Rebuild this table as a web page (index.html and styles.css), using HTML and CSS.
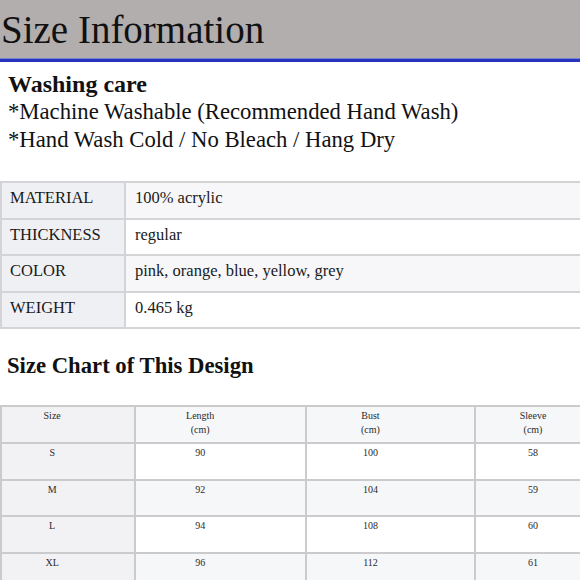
FILE: index.html
```html
<!DOCTYPE html>
<html lang="en">
<head>
<meta charset="utf-8">
<title>Size Information</title>
<link rel="stylesheet" href="styles.css">
</head>
<body>
<header class="banner">
  <h1 class="banner-title">Size Information</h1>
</header>

<section class="care">
  <h2 class="care-title">Washing care</h2>
  <p class="care-line">*Machine Washable (Recommended Hand Wash)</p>
  <p class="care-line">*Hand Wash Cold / No Bleach / Hang Dry</p>
</section>

<div class="clip">
  <div class="specs">
    <div class="spec-label">MATERIAL</div><div class="spec-value stripe">100% acrylic</div>
    <div class="spec-label">THICKNESS</div><div class="spec-value">regular</div>
    <div class="spec-label">COLOR</div><div class="spec-value stripe">pink, orange, blue, yellow, grey</div>
    <div class="spec-label">WEIGHT</div><div class="spec-value">0.465 kg</div>
  </div>
</div>

<h2 class="chart-title">Size Chart of This Design</h2>

<div class="clip">
  <div class="chart">
    <div class="cell first"><div class="txt">Size</div></div>
    <div class="cell stripe"><div class="txt">Length<br>(cm)</div></div>
    <div class="cell stripe"><div class="txt">Bust<br>(cm)</div></div>
    <div class="cell stripe"><div class="txt">Sleeve<br>(cm)</div></div>

    <div class="cell first"><div class="txt">S</div></div>
    <div class="cell"><div class="txt">90</div></div>
    <div class="cell"><div class="txt">100</div></div>
    <div class="cell"><div class="txt">58</div></div>

    <div class="cell first"><div class="txt">M</div></div>
    <div class="cell stripe"><div class="txt">92</div></div>
    <div class="cell stripe"><div class="txt">104</div></div>
    <div class="cell stripe"><div class="txt">59</div></div>

    <div class="cell first"><div class="txt">L</div></div>
    <div class="cell"><div class="txt">94</div></div>
    <div class="cell"><div class="txt">108</div></div>
    <div class="cell"><div class="txt">60</div></div>

    <div class="cell first"><div class="txt">XL</div></div>
    <div class="cell stripe"><div class="txt">96</div></div>
    <div class="cell stripe"><div class="txt">112</div></div>
    <div class="cell stripe"><div class="txt">61</div></div>
  </div>
</div>
</body>
</html>
```

FILE: styles.css
```css
html, body {
  margin: 0;
  padding: 0;
  background: #ffffff;
  overflow: hidden;
}

body {
  font-family: "Liberation Serif", "Times New Roman", serif;
  color: #111;
  width: 580px;
}

.banner {
  background: #b3aeae;
  height: 59px;
  border-bottom: 3px solid #2633bd;
  box-shadow: inset 0 -1px 0 #7a84d6;
}

.banner-title {
  margin: 0;
  padding-left: 1px;
  font-weight: normal;
  font-size: 39px;
  line-height: 59px;
  color: #111;
}

.care {
  padding: 8px 0 0 8px;
}

.care-title {
  margin: 0;
  font-size: 24px;
  font-weight: bold;
  line-height: 28px;
}

.care-line {
  margin: 0;
  font-size: 22.7px;
  line-height: 28px;
}

.clip {
  width: 580px;
  overflow: hidden;
}

.specs {
  margin-top: 27px;
  width: 640px;
  display: grid;
  grid-template-columns: 122px 1fr;
  grid-auto-rows: 34.5px;
  gap: 2px;
  padding: 2px;
  background: #d4d4d6;
  box-sizing: border-box;
}

.spec-label,
.spec-value {
  font-size: 16.5px;
  line-height: 20px;
  padding-top: 5px;
  color: #1a1a1a;
}

.spec-label {
  background: #eff0f3;
  padding-left: 8px;
}

.spec-value {
  background: #ffffff;
  padding-left: 9px;
}

.spec-value.stripe {
  background: #f7f7f9;
}

.chart-title {
  margin: 23px 0 0 7px;
  font-size: 22.7px;
  font-weight: bold;
  line-height: 28px;
}

.chart {
  margin-top: 25px;
  width: 630px;
  display: grid;
  grid-template-columns: 132px 169px 167px 150px;
  grid-auto-rows: 34.75px;
  gap: 2px;
  padding: 2px;
  background: #cbcbcd;
  box-sizing: border-box;
}

.cell {
  background: #ffffff;
  font-size: 10px;
  line-height: 14px;
  padding-top: 2px;
  color: #2a2a2a;
}

.cell.stripe {
  background: #f6f7f9;
}

.cell.first {
  background: #f2f2f5;
}

.txt {
  width: 76%;
  text-align: center;
}
```
